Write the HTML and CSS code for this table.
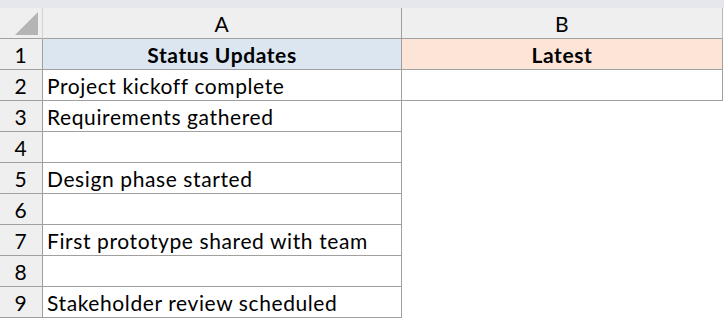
FILE: index.html
```html
<!DOCTYPE html>
<html>
<head>
<meta charset="utf-8">
<link rel="stylesheet" href="styles.css">
</head>
<body>
<div class="topbar"></div>
<div class="sheet">
  <div class="corner"><svg class="tri" width="24" height="24" viewBox="0 0 24 24"><polygon points="23,0 23,23 0,23" fill="#b4b4b4"/></svg></div>
  <div class="colhead">A</div>
  <div class="colhead last">B</div>

  <div class="rowhead">1</div>
  <div class="cell hdr-a bold center">Status Updates</div>
  <div class="cell hdr-b bold center">Latest</div>

  <div class="rowhead">2</div>
  <div class="cell">Project kickoff complete</div>
  <div class="cell"></div>

  <div class="rowhead">3</div>
  <div class="cell">Requirements gathered</div>
  <div class="empty"></div>

  <div class="rowhead">4</div>
  <div class="cell"></div>
  <div class="empty"></div>

  <div class="rowhead">5</div>
  <div class="cell">Design phase started</div>
  <div class="empty"></div>

  <div class="rowhead">6</div>
  <div class="cell"></div>
  <div class="empty"></div>

  <div class="rowhead">7</div>
  <div class="cell">First prototype shared with team</div>
  <div class="empty"></div>

  <div class="rowhead">8</div>
  <div class="cell"></div>
  <div class="empty"></div>

  <div class="rowhead">9</div>
  <div class="cell">Stakeholder review scheduled</div>
  <div class="empty"></div>
</div>
</body>
</html>
```
FILE: styles.css
```css
html, body {
  margin: 0;
  padding: 0;
  background: #ffffff;
}
body {
  font-family: Lato, "Open Sans", sans-serif;
  font-size: 21px;
  letter-spacing: 0.6px;
  color: #000;
}
.topbar {
  height: 8px;
  background: #e6e7ec;
}
.sheet {
  display: grid;
  grid-template-columns: 43px 359px 321px;
  grid-template-rows: 31px;
  grid-auto-rows: 31px;
  width: 723px;
}
.sheet > div {
  box-sizing: border-box;
  display: flex;
  align-items: center;
  white-space: nowrap;
  overflow: hidden;
}
.corner {
  background: #efefef;
  border-right: 1px solid #d2d2d2;
  border-bottom: 1px solid #a0a0a0;
  justify-content: flex-end;
  align-items: flex-start !important;
  padding: 4px 3px 0 0;
}
.colhead {
  background: #efefef;
  border-right: 1px solid #a0a0a0;
  border-bottom: 1px solid #a0a0a0;
  justify-content: center;
  padding-top: 1px;
}
.colhead.last {
  border-right: 1px solid #b8b8b8;
}
.rowhead {
  background: #efefef;
  border-right: 1px solid #a0a0a0;
  border-bottom: 1px solid #a0a0a0;
  justify-content: center;
  padding-top: 1px;
}
.cell {
  background: #ffffff;
  border-right: 1px solid #a0a0a0;
  border-bottom: 1px solid #a0a0a0;
  padding: 0 0 0 4px;
}
.empty {
  background: #ffffff;
}
.hdr-a {
  background: #dce6f1;
}
.hdr-b {
  background: #fce4d6;
}
.bold {
  font-weight: 700;
}
.center {
  justify-content: center;
  padding-left: 0;
}
```
